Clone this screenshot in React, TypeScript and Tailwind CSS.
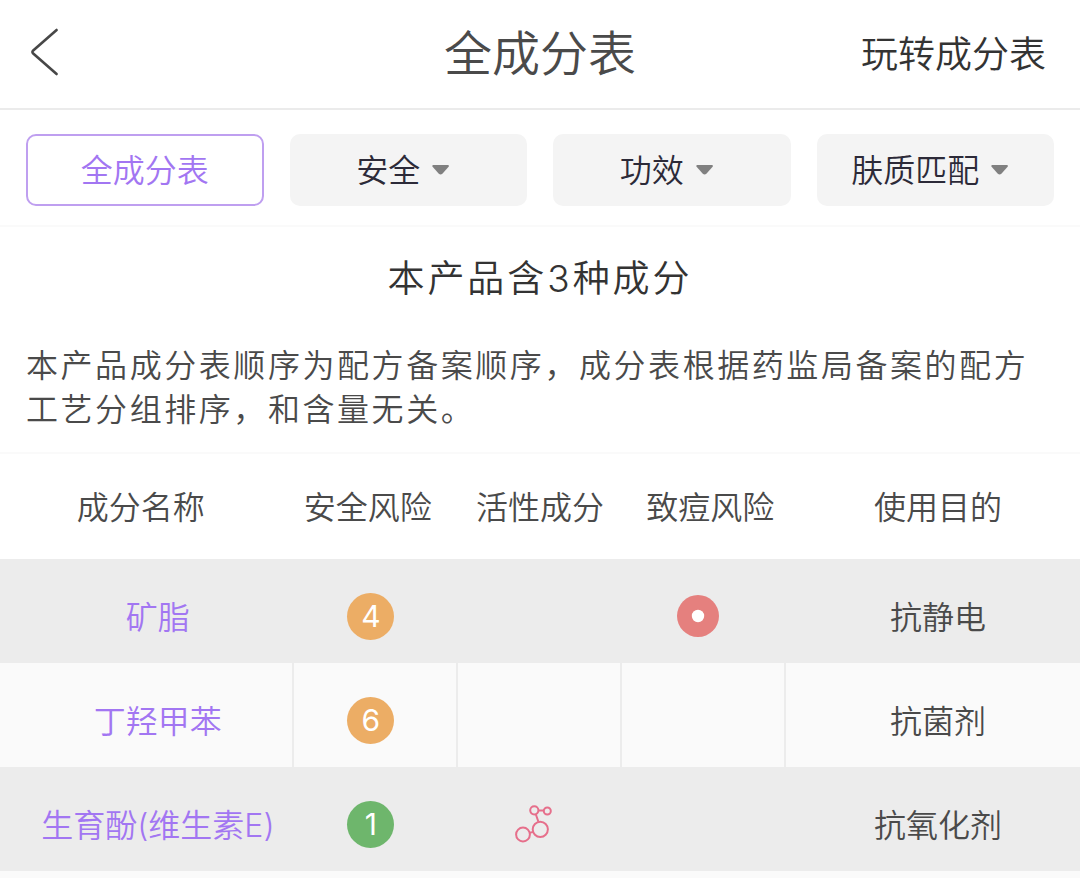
import { useState } from 'react';
import clsx from 'clsx';

type Ingredient = {
  name: string;
  risk: number;
  active?: boolean;
  acne?: boolean;
  purpose: string;
};

const ingredients: Ingredient[] = [
  { name: '矿脂', risk: 4, acne: true, purpose: '抗静电' },
  { name: '丁羟甲苯', risk: 6, purpose: '抗菌剂' },
  { name: '生育酚(维生素E)', risk: 1, active: true, purpose: '抗氧化剂' },
];

const filters = ['安全', '功效', '肤质匹配'];

function BackIcon() {
  return (
    <svg width="32" height="52" viewBox="0 0 32 52" fill="none" aria-hidden="true">
      <path
        d="M26.6 4 3.2 24.6q-1.6 1.4 0 2.8L26.6 48"
        stroke="#474747"
        strokeWidth="2.6"
        strokeLinecap="round"
        strokeLinejoin="round"
      />
    </svg>
  );
}

function CaretIcon() {
  return (
    <svg width="18" height="12" viewBox="0 0 18 12" className="shrink-0" aria-hidden="true">
      <path
        d="M1.2 1h14.8q1.4 0.4 0.6 1.8L10.4 9.8q-1.8 1.6-3.6 0L0.6 2.8Q-0.2 1.4 1.2 1z"
        fill="#808080"
      />
    </svg>
  );
}

function MoleculeIcon() {
  return (
    <svg
      width="38"
      height="38"
      viewBox="0 0 38 38"
      fill="none"
      stroke="#e66f8b"
      strokeWidth="2"
      role="img"
      aria-label="活性成分"
    >
      <circle cx="20.3" cy="5.3" r="4.1" />
      <circle cx="33.3" cy="6" r="3.5" />
      <circle cx="26.3" cy="24.3" r="7.6" />
      <circle cx="9" cy="29.5" r="6.9" />
      <path d="M24.4 5.6h5.4M21.8 9.2l2.6 7.6M15.8 27.9l3.2-1" />
    </svg>
  );
}

function AcneIcon() {
  return (
    <svg width="42" height="42" viewBox="0 0 42 42" role="img" aria-label="致痘风险">
      <circle cx="21" cy="21" r="21" fill="#e5807e" />
      <circle cx="21" cy="21" r="6.2" fill="#fff" />
    </svg>
  );
}

function RiskBadge({ risk }: { risk: number }) {
  return (
    <span
      className={clsx(
        'inline-flex size-[47px] items-center justify-center rounded-full text-[30px] leading-none font-normal text-white',
        risk > 2 ? 'bg-[#ecad65]' : 'bg-[#6eb66c]',
      )}
    >
      {risk}
    </span>
  );
}

export default function App() {
  const [showAll, setShowAll] = useState(true);

  return (
    <div className="min-h-screen bg-[#fafafa] font-['Inter','Noto_Sans_CJK_SC',sans-serif] text-[32px] font-[350] text-[#4a4a4a]">
      <header className="grid h-[110px] grid-cols-[1fr_auto_1fr] items-center border-b-2 border-[#ebebeb] bg-white px-[30px]">
        <button type="button" aria-label="返回" className="justify-self-start pb-1">
          <BackIcon />
        </button>
        <h1 className="text-[48px] leading-none">全成分表</h1>
        <a href="#guide" className="mr-1 justify-self-end text-[37px] leading-none text-[#333]">
          玩转成分表
        </a>
      </header>

      <nav className="grid grid-cols-4 gap-[26px] border-b-2 border-[#fafafa] bg-white px-[26px] pt-6 pb-[19px]">
        <button
          type="button"
          aria-pressed={showAll}
          onClick={() => setShowAll(!showAll)}
          className="h-[72px] rounded-[10px] border-2 border-[#bf9ff0] pt-[2px] text-[#a276f2]"
        >
          全成分表
        </button>
        {filters.map(filter => (
          <label
            key={filter}
            className="flex h-[72px] items-center justify-center gap-3 rounded-[10px] bg-[#f4f4f4] pr-[10px] text-[#2c2a38]"
          >
            <select
              aria-label={filter}
              className="appearance-none bg-transparent pt-[2px] [field-sizing:content] focus:outline-none"
            >
              <option>{filter}</option>
            </select>
            <CaretIcon />
          </label>
        ))}
      </nav>

      <section className="border-b-2 border-[#fafafa] bg-white px-[26px] pt-[26px] pb-5">
        <h2 className="text-center text-[37px] leading-[52px] tracking-[0.08em] text-[#333]">
          本产品含3种成分
        </h2>
        <p className="mt-[39px] leading-[44px] tracking-[0.08em]">
          本产品成分表顺序为配方备案顺序，成分表根据药监局备案的配方工艺分组排序，和含量无关。
        </p>
      </section>

      <table className="w-full table-fixed border-separate border-spacing-0 text-center leading-[44px] whitespace-nowrap">
        <colgroup>
          <col className="w-[27.2%]" />
          <col className="w-[15.2%]" />
          <col className="w-[15.2%]" />
          <col className="w-[15.2%]" />
          <col className="w-[27.2%]" />
        </colgroup>
        <thead className="bg-white">
          <tr className="h-[105px] [&>th]:pt-[3px] [&>th]:font-[350]">
            <th scope="col" className="pr-3">成分名称</th>
            <th scope="col" className="pr-4">安全风险</th>
            <th scope="col">活性成分</th>
            <th scope="col" className="pl-3">致痘风险</th>
            <th scope="col" className="pl-[10px]">使用目的</th>
          </tr>
        </thead>
        <tbody>
          {ingredients.map(item => (
            <tr
              key={item.name}
              className="h-[104px] odd:bg-[#ececec] [&>td]:pt-[14px] [&>td:not(:last-child)]:border-r-2 [&>td:not(:last-child)]:border-[#ececec]"
            >
              <td className="pl-6">
                <a href="#ingredient" className="text-[#a276f2]">
                  {item.name}
                </a>
              </td>
              <td className="pr-2">
                <span className="flex justify-center pb-1">
                  <RiskBadge risk={item.risk} />
                </span>
              </td>
              <td className="pr-3">
                <span className="flex justify-center pb-1">{item.active && <MoleculeIcon />}</span>
              </td>
              <td className="pr-[10px]">
                <span className="flex justify-center pb-1">{item.acne && <AcneIcon />}</span>
              </td>
              <td className="pl-[10px]">{item.purpose}</td>
            </tr>
          ))}
        </tbody>
      </table>
    </div>
  );
}
